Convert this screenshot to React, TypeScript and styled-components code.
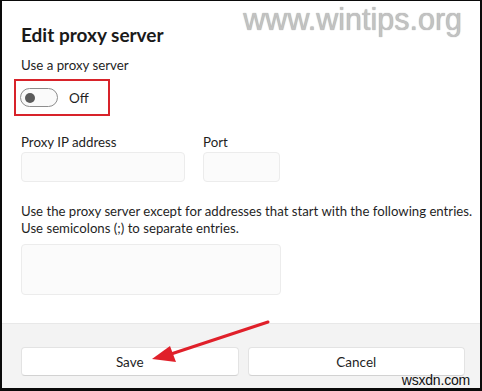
import React from "react";
import styled, { createGlobalStyle } from "styled-components";

const GlobalStyle = createGlobalStyle`
  html, body {
    margin: 0;
    padding: 0;
    background: #ffffff;
  }
  body {
    font-family: Lato, "Noto Sans", sans-serif;
    color: #1b1b1b;
  }
`;

const Frame = styled.div`
  position: relative;
  width: 482px;
  height: 391px;
  box-sizing: border-box;
  border-style: solid;
  border-color: #0a0a0a;
  border-width: 1px 2px 3px 2px;
  background: #ffffff;
  display: flex;
  flex-direction: column;
  overflow: hidden;
`;

const Body = styled.div`
  flex: 1;
  padding: 21px 0 0 19px;
  display: flex;
  flex-direction: column;
  align-items: flex-start;
`;

const Title = styled.h1`
  margin: 0;
  font-size: 19px;
  line-height: 26px;
  font-weight: 700;
  color: #1a1a1a;
`;

const Text = styled.div<{ $top?: number }>`
  margin-top: ${(p) => p.$top ?? 0}px;
  font-size: 13.3px;
  line-height: 19px;
  color: #1f1f1f;
  white-space: nowrap;
`;

const Paragraph = styled.p`
  margin: 21px 0 0;
  font-size: 13.2px;
  line-height: 17px;
  color: #1f1f1f;
  white-space: nowrap;
`;

const Highlight = styled.div`
  margin: 4px 0 0 -7px;
  width: 96px;
  height: 37px;
  box-sizing: border-box;
  border: 2px solid #d8232a;
  padding-left: 4px;
  display: flex;
  align-items: center;
  gap: 11px;
`;

const Toggle = styled.div`
  width: 38px;
  height: 19px;
  box-sizing: border-box;
  border: 1px solid #8d8d8d;
  border-radius: 10px;
  background: #fafafa;
  display: flex;
  align-items: center;
  padding-left: 4px;
`;

const Knob = styled.span`
  width: 10px;
  height: 10px;
  border-radius: 50%;
  background: #5b5b5b;
`;

const ToggleLabel = styled.span`
  font-size: 13.5px;
  color: #1f1f1f;
`;

const FieldRow = styled.div`
  margin-top: 17px;
  display: flex;
  gap: 18px;
`;

const Field = styled.div`
  display: flex;
  flex-direction: column;
`;

const Input = styled.div<{ $w: number; $h: number; $top?: number }>`
  width: ${(p) => p.$w}px;
  height: ${(p) => p.$h}px;
  margin-top: ${(p) => p.$top ?? 0}px;
  box-sizing: border-box;
  border: 1px solid #ececec;
  border-radius: 4px;
  background: #fbfbfb;
`;

const Footer = styled.div`
  height: 65px;
  box-sizing: border-box;
  border-top: 1px solid #e8e8e8;
  background: #f3f3f3;
  padding: 23px 15px 0 19px;
  display: flex;
  gap: 9px;
`;

const Button = styled.div`
  flex: 1;
  height: 29px;
  box-sizing: border-box;
  border: 1px solid #e3e3e3;
  border-bottom-color: #d2d2d2;
  border-radius: 4px;
  background: #ffffff;
  display: flex;
  align-items: center;
  justify-content: center;
  font-size: 13.5px;
  color: #1f1f1f;
`;

const Watermark = styled.div`
  position: absolute;
  top: 3px;
  right: 18px;
  font-family: "Liberation Sans", Arial, sans-serif;
  font-size: 30.5px;
  line-height: 30px;
  color: #c2c2c2;
  text-shadow: 0 0 1px #999;
`;

const Credit = styled.div`
  position: absolute;
  right: 10px;
  bottom: 0px;
  font-family: "Liberation Sans", Arial, sans-serif;
  font-size: 14px;
  letter-spacing: -0.2px;
  line-height: 16px;
  color: #111;
`;

const Arrow = styled.svg`
  position: absolute;
  left: 0;
  top: 0;
  pointer-events: none;
`;

export default function App() {
  return (
    <>
      <GlobalStyle />
      <Frame>
        <Body>
          <Title>Edit proxy server</Title>
          <Text $top={8}>Use a proxy server</Text>
          <Highlight>
            <Toggle>
              <Knob />
            </Toggle>
            <ToggleLabel>Off</ToggleLabel>
          </Highlight>
          <FieldRow>
            <Field>
              <Text>Proxy IP address</Text>
              <Input $w={164} $h={30} />
            </Field>
            <Field>
              <Text>Port</Text>
              <Input $w={77} $h={30} />
            </Field>
          </FieldRow>
          <Paragraph>
            Use the proxy server except for addresses that start with the following entries.
            <br />
            Use semicolons (;) to separate entries.
          </Paragraph>
          <Input $w={260} $h={51} $top={7} />
        </Body>
        <Footer>
          <Button>Save</Button>
          <Button>Cancel</Button>
        </Footer>
        <Watermark>www.wintips.org</Watermark>
        <Credit>wsxdn.com</Credit>
        <Arrow width="478" height="387" viewBox="2 1 478 387">
          <line x1="268" y1="322" x2="168" y2="355" stroke="#e0202a" strokeWidth="3" strokeLinecap="round" />
          <polygon points="152,359 170,346 176,362" fill="#e0202a" />
        </Arrow>
      </Frame>
    </>
  );
}
